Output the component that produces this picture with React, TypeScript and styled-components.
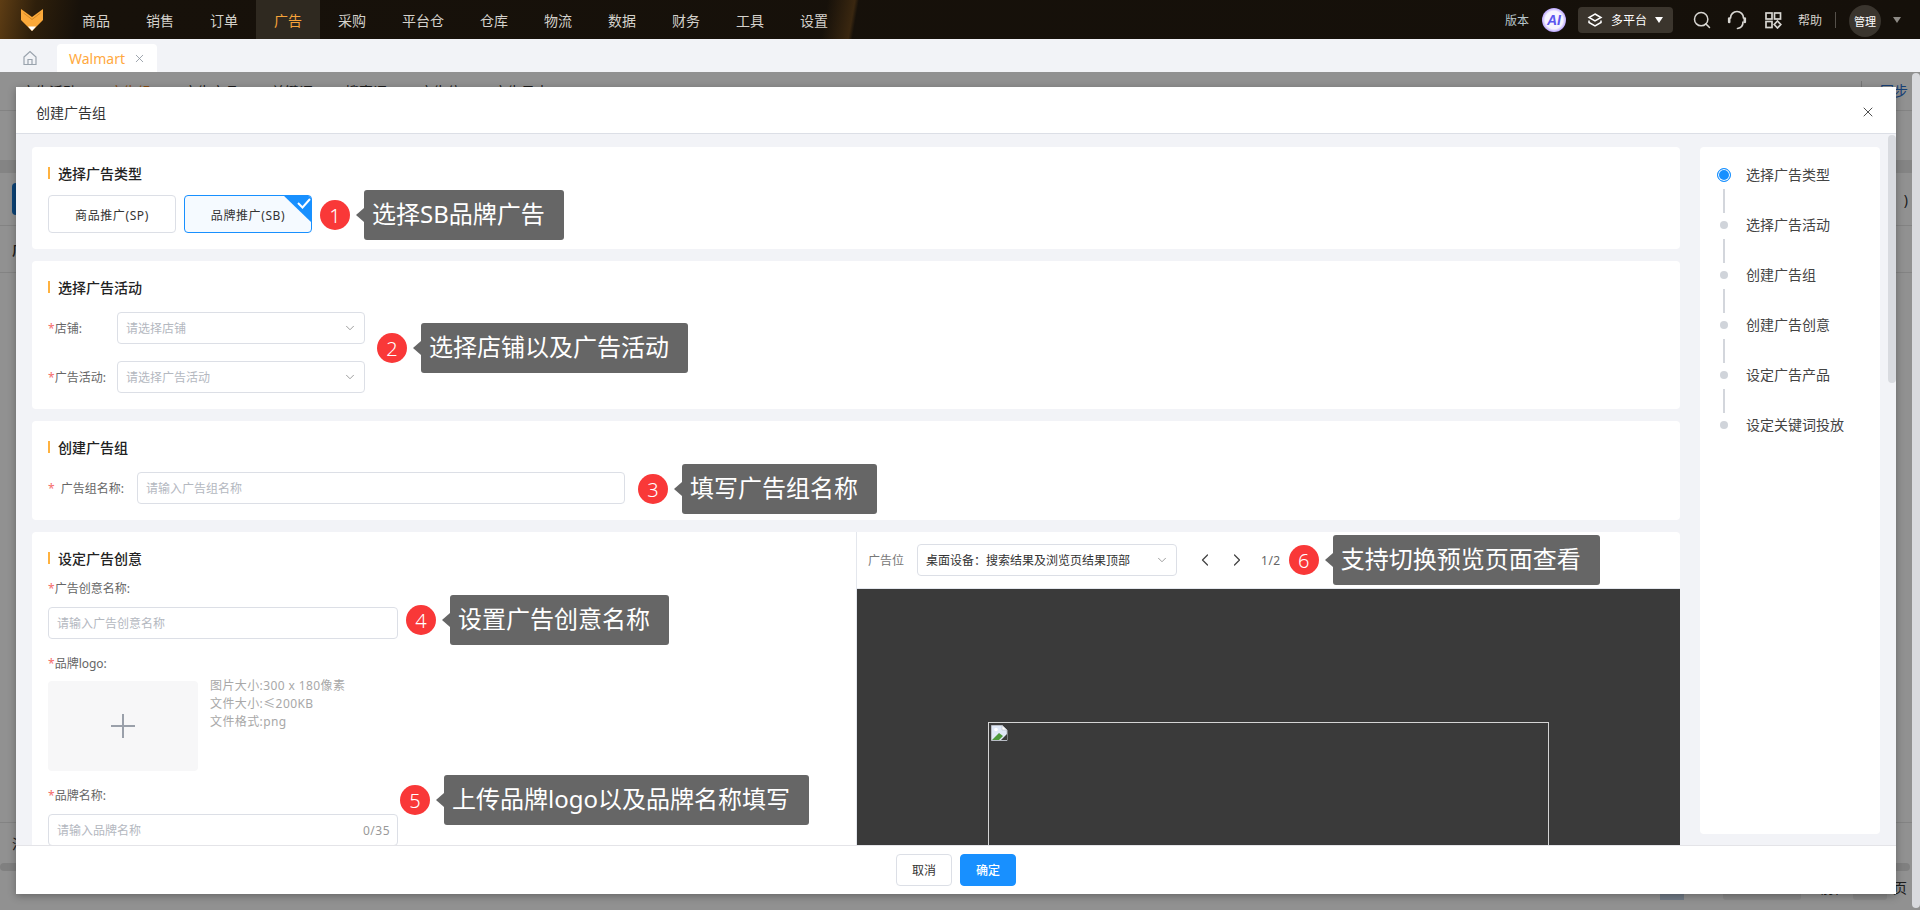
import React from "react";
import styled, { createGlobalStyle } from "styled-components";
import { ChevronDown, ChevronLeft, ChevronRight, X, Search } from "lucide-react";

const Global = createGlobalStyle`
  html, body { margin: 0; padding: 0; height: 910px; overflow: hidden; }
  body { font-family: "Noto Sans", "Noto Sans CJK SC", sans-serif; font-size: 12px; color: #333; background: #fff; }
  * { box-sizing: border-box; }
`;

const Page = styled.div`
  width: 1920px; height: 910px; display: flex; flex-direction: column; position: relative; overflow: hidden;
`;
const TopBar = styled.header`
  height: 39px; flex: none; display: flex; align-items: center; color: #d4d1cc;
  background:
    linear-gradient(100deg, transparent 0, transparent 815px, #3a2710 842px, transparent 846px),
    linear-gradient(100deg, #5e3d14 0, #2e1f0b 36px, #17110a 80px, #15100a 100%);
`;
const LogoCell = styled.div`
  width: 64px; height: 39px; flex: none; display: flex; align-items: center; padding-left: 21px;
`;
const NavItem = styled.div<{ $active?: boolean }>`
  height: 39px; flex: none; display: flex; align-items: center; padding: 0 18px;
  font-size: 14px; color: ${(p) => (p.$active ? "#f5a33a" : "#d4d1cc")};
  background: ${(p) => (p.$active ? "#2f2920" : "transparent")};
`;
const TopRight = styled.div`
  margin-left: auto; display: flex; align-items: center; height: 39px; padding-right: 19px;
`;
const VersionText = styled.span`
  font-size: 12px; color: #b8c6cb; margin-right: 13px; letter-spacing: 0;
`;
const AiCircle = styled.div`
  width: 24px; height: 24px; border-radius: 50%; display: flex; align-items: center; justify-content: center;
  background: radial-gradient(circle, #f6f4ff 52%, #a88cff 76%, #4fa8f5 100%);
  color: #5b57ee; font: italic 700 14px "Liberation Sans", sans-serif; margin-right: 12px;
`;
const PlatformPill = styled.div`
  width: 95px; height: 26px; border-radius: 4px; background: #3b352d; display: flex; align-items: center;
  padding-left: 9px; color: #fff; font-size: 12px; margin-right: 19px;
`;
const PillText = styled.span`
  margin: 0 8px 0 8px;
`;
const Caret = styled.span<{ $muted?: boolean }>`
  width: 0; height: 0; border-left: 4.5px solid transparent; border-right: 4.5px solid transparent;
  border-top: 6px solid ${(p) => (p.$muted ? "#8d8a85" : "#fff")};
`;
const TopIcon = styled.div<{ $gap: number }>`
  width: 20px; height: 20px; display: flex; align-items: center; justify-content: center; margin-right: ${(p) => p.$gap}px; color: #d8d6d2;
`;
const HelpText = styled.span`
  color: #d4d1cc; font-size: 12px;
`;
const TopSep = styled.div`
  width: 1px; height: 16px; background: #55504a; margin: 0 13px 0 13px;
`;
const Avatar = styled.div`
  width: 32px; height: 32px; border-radius: 50%; background: #3a352e; color: #fff; font-size: 11px;
  display: flex; align-items: center; justify-content: center; margin: 2px 12px 0 0;
`;

const TabBar = styled.nav`
  height: 33px; flex: none; background: #f2f3f7; display: flex; align-items: flex-end; padding-left: 22px;
`;
const HomeIcon = styled.div`
  width: 16px; height: 28px; margin-right: 19px; display: flex; align-items: center;
`;
const Tab = styled.div`
  width: 100px; height: 28px; background: #fff; border-radius: 4px 4px 0 0; display: flex; align-items: center;
  padding-left: 12px; font-size: 14px; color: #ffa940; gap: 8px;
`;

const Behind = styled.div`
  flex: 1; display: flex; min-height: 0; background: #919191;
`;
const Backdrop = styled.div`
  flex: 1; position: relative; background: #fff; overflow: hidden; display: flex; flex-direction: column;
  &::after { content: ""; position: absolute; inset: 0; background: rgba(0, 0, 0, 0.43); }
`;
const PageScroll = styled.div`
  width: 8px; height: 835px; margin-top: 1px; background: #d9dade; border-radius: 4px; flex: none;
`;
const SubTabs = styled.div`
  height: 39px; flex: none; display: flex; align-items: center; gap: 32px; padding: 0 4px 0 21px; font-size: 14px; color: #333;
  border-bottom: 1px solid #e6e6e6;
`;
const SubTab = styled.span<{ $active?: boolean }>`
  color: ${(p) => (p.$active ? "#f5891f" : "#333")};
`;
const SyncLink = styled.span`
  margin-left: auto; padding-left: 18px; border-left: 1px solid #d0d0d0; color: #2a6fd0; line-height: 20px;
`;
const Spacer = styled.div`
  height: 49px; flex: none;
`;
const Band = styled.div`
  height: 13px; flex: none; background: #e9e9e9;
`;
const FilterRow = styled.div`
  height: 53px; flex: none; display: flex; align-items: center; justify-content: space-between; padding: 0 4px 0 12px;
  border-bottom: 1px solid #e6e6e6; font-size: 14px; color: #333;
`;
const BlueBlock = styled.div`
  width: 60px; height: 32px; background: #1677d2; border-radius: 4px;
`;
const HeadRow = styled.div`
  height: 47px; flex: none; display: flex; align-items: center; padding-left: 12px; border-bottom: 1px solid #e6e6e6;
  font-size: 14px; font-weight: 500; color: #333;
`;
const TableBody = styled.div`
  height: 550px; flex: none; border-bottom: 1px solid #e6e6e6;
`;
const SumRow = styled.div`
  height: 40px; flex: none; display: flex; align-items: center; padding: 0 0 0 12px; font-size: 14px; color: #333;
`;
const HScroll = styled.div`
  height: 8px; flex: none; margin-right: 2px; border-radius: 4px; background: #e2e2e2;
`;
const Pagination = styled.div`
  height: 32px; flex: none; display: flex; align-items: center; justify-content: flex-end; padding-right: 5px; font-size: 14px; color: #333;
`;
const PageCell = styled.div`
  width: 24px; height: 26px; background: #c7d9ec; margin-right: 39px;
`;
const PageSelect = styled.div`
  width: 78px; height: 26px; border-radius: 3px; background: #f0f0f0; margin-right: 19px; display: flex; align-items: center; justify-content: center; font-size: 12px;
`;
const PageInput = styled.div`
  width: 34px; height: 26px; border-radius: 3px; background: #f0f0f0; margin: 0 6px 0 5px;
`;

const Modal = styled.section`
  position: absolute; left: 16px; top: 87px; width: 1880px; height: 807px; background: #fff; display: flex; flex-direction: column;
  box-shadow: 0 2px 8px rgba(0, 0, 0, 0.3);
`;
const ModalHead = styled.div`
  height: 47px; flex: none; display: flex; align-items: center; justify-content: space-between; padding: 3px 20px 0 20px;
  border-bottom: 1px solid #dcdfe6; font-size: 14px; color: #333;
`;
const ModalBody = styled.div`
  flex: 1; min-height: 0; background: #f2f3f7; display: flex; padding: 13px 16px 0 16px; position: relative; overflow: hidden;
`;
const BodyScroll = styled.div`
  position: absolute; right: 0; top: 1px; width: 8px; height: 248px; border-radius: 4px; background: #d9dbe0;
`;
const FormColumn = styled.div`
  width: 1648px; flex: none; display: flex; flex-direction: column; gap: 12px; min-height: 0;
`;
const Card = styled.div<{ $h?: number }>`
  background: #fff; border-radius: 4px; padding: 20px 16px 0; position: relative; flex: none;
  height: ${(p) => p.$h}px;
`;
const CreativeCard = styled.div`
  background: #fff; border-radius: 4px 4px 0 0; position: relative; flex: 1; min-height: 0; display: flex; overflow: hidden;
`;
const Heading = styled.h3`
  margin: 0; height: 12px; display: flex; align-items: center; gap: 8px; font-size: 14px; font-weight: 500; color: #222;
  line-height: 14px; padding-top: 1px; overflow: visible;
  &::before { content: ""; width: 2px; height: 12px; margin-top: -1px; background: #ffb23f; flex: none; }
`;
const TypeRow = styled.div`
  display: flex; gap: 8px; margin-top: 16px;
`;
const TypeButton = styled.div<{ $selected?: boolean }>`
  width: 128px; height: 38px; border-radius: 4px; position: relative; display: flex; align-items: center; justify-content: center;
  font-size: 12px; color: #333; overflow: hidden; letter-spacing: 0.6px; padding-top: 1px;
  border: 1px solid ${(p) => (p.$selected ? "#1890ff" : "#dcdfe6")};
  background: ${(p) => (p.$selected ? "#f5faff" : "#fff")};
`;
const CheckCorner = styled.svg`
  position: absolute; right: -1px; top: -1px;
`;
const FieldRow = styled.div<{ $top: number }>`
  display: flex; align-items: center; margin-top: ${(p) => p.$top}px;
`;
const InlineLabel = styled.label<{ $w: number }>`
  width: ${(p) => p.$w}px; flex: none; font-size: 12px; color: #666;
`;
const Req = styled.span<{ $space?: boolean }>`
  color: #f56c6c; margin-right: ${(p) => (p.$space ? 6 : 0)}px;
`;
const Control = styled.div<{ $w: number; $strong?: boolean }>`
  width: ${(p) => p.$w}px; height: 32px; border: 1px solid #dcdfe6; border-radius: 4px; display: flex; align-items: center;
  justify-content: space-between; padding: 0 7px 0 8px; font-size: 12px; background: #fff; flex: none;
  color: ${(p) => (p.$strong ? "#333" : "#b4b8bf")};
`;
const Counter = styled.span`
  color: #999; letter-spacing: 0.5px;
`;
const LeftPane = styled.div`
  width: 825px; flex: none; padding: 20px 16px 0; border-right: 1px solid #e4e7ed;
`;
const BlockLabel = styled.label<{ $bottom: number }>`
  display: block; margin: 17px 0 ${(p) => p.$bottom}px; line-height: 16px; font-size: 12px; color: #666;
`;
const UploadRow = styled.div`
  display: flex; gap: 12px;
`;
const UploadBox = styled.div`
  width: 150px; height: 90px; border-radius: 4px; background: #f7f7f8; display: flex; align-items: center; justify-content: center;
`;
const UploadHints = styled.div`
  color: #a8a8a8; font-size: 12px; line-height: 18px; margin-top: -4px; letter-spacing: 0.4px;
`;
const RightPane = styled.div`
  flex: 1; min-width: 0; display: flex; flex-direction: column;
`;
const PreviewBar = styled.div`
  height: 57px; flex: none; display: flex; align-items: center; padding-left: 11px; border-bottom: 1px solid #e4e7ed; font-size: 12px;
`;
const BarLabel = styled.span`
  color: #777; margin-right: 13px;
`;
const PagerButton = styled.div<{ $first?: boolean }>`
  width: 32px; height: 32px; display: flex; align-items: center; justify-content: center; color: #444; margin-left: ${(p) => (p.$first ? 12 : 0)}px;
`;
const PageCount = styled.span`
  color: #666; margin: 0 8px; letter-spacing: 0.5px;
`;
const Preview = styled.div`
  flex: 1; min-height: 0; background: #3a3a3a; padding: 133px 0 0 131px; overflow: hidden;
`;
const PreviewFrame = styled.div`
  width: 561px; height: 320px; border: 1px solid #d4d4d4; padding: 2px 0 0 2px;
`;
const Annotation = styled.div<{ $left?: number; $top?: number }>`
  display: flex; align-items: center; gap: 14px; height: 50px; flex: none; z-index: 2;
  ${(p) => (p.$left !== undefined ? `position: absolute; left: ${p.$left}px; top: ${p.$top}px;` : "")}
`;
const NumberBadge = styled.div`
  width: 30px; height: 30px; border-radius: 50%; background: #f93838; color: #fff; font-size: 20px; font-weight: 300; display: flex; align-items: center; justify-content: center;
`;
const Callout = styled.div`
  height: 50px; background: #666; border-radius: 3px; color: #fff; font-size: 24px; line-height: 48px; padding: 0 19px 0 8px; position: relative; white-space: nowrap;
  &::before { content: ""; position: absolute; left: -8px; top: 18px; border-top: 7px solid transparent; border-bottom: 7px solid transparent; border-right: 8px solid #666; }
`;
const StepsPanel = styled.aside`
  width: 180px; flex: none; margin: 0 0 11px 20px; background: #fff; border-radius: 4px; padding-top: 3px;
`;
const Step = styled.div<{ $last?: boolean }>`
  height: 50px; display: flex; align-items: center; position: relative; font-size: 14px; color: #444;
  ${(p) => (p.$last ? "" : `&::after { content: ""; position: absolute; left: 23px; top: 39px; width: 2px; height: 24px; background: #d3d6dc; }`)}
`;
const StepLabel = styled.span`
  margin-top: -2px;
`;
const DotCell = styled.div`
  width: 46px; flex: none; padding-right: 0; display: flex; justify-content: center;
`;
const Dot = styled.span<{ $active?: boolean }>`
  display: block; border-radius: 50%; margin-left: 1px;
  ${(p) =>
    p.$active
      ? "width: 14px; height: 14px; background: #1890ff; border: 1px solid #1890ff; box-shadow: inset 0 0 0 1px #fff;"
      : "width: 8px; height: 8px; background: #d0d4da;"}
`;
const ModalFoot = styled.div`
  height: 49px; flex: none; border-top: 1px solid #e4e4e8; background: #fff; display: flex; align-items: center; justify-content: center; gap: 8px;
`;
const FootButton = styled.button<{ $primary?: boolean }>`
  width: 56px; height: 32px; border-radius: 4px; font: inherit; font-size: 12px; cursor: pointer; padding: 0;
  border: 1px solid ${(p) => (p.$primary ? "#1890ff" : "#dcdfe6")};
  background: ${(p) => (p.$primary ? "#1890ff" : "#fff")};
  color: ${(p) => (p.$primary ? "#fff" : "#333")};
  font-weight: ${(p) => (p.$primary ? 500 : 400)};
`;

const FoxLogo = () => (
  <svg width="22" height="22" viewBox="0 0 22 22">
    <path d="M0 0 L11 8 L22 0 V11 L11 22 L0 11 Z" fill="#fba93a" />
    <path d="M2.5 4 L11 10.5 L19.5 4" fill="none" stroke="#c97f20" strokeWidth="0.8" />
    <path d="M7 17.5 H15 L11 22 Z" fill="#fff" />
  </svg>
);
const HomeGlyph = () => (
  <svg width="16" height="16" viewBox="0 0 16 16" fill="none" stroke="#9aa3ad" strokeWidth="1.2">
    <path d="M2 7 L8 1.5 L14 7 V14.5 H2 Z" />
    <path d="M6 14.5 V9.5 H10 V14.5" />
  </svg>
);
const LayersGlyph = () => (
  <svg width="16" height="16" viewBox="0 0 16 16" fill="none" stroke="#fff" strokeWidth="1.5">
    <path d="M8 2 L14 5.5 L8 9 L2 5.5 Z" />
    <path d="M2 8.5 V10.5 L8 14 L14 10.5 V8.5" />
  </svg>
);
const HeadsetGlyph = () => (
  <svg width="20" height="20" viewBox="0 0 20 20" fill="none" stroke="#d8d6d2" strokeWidth="1.7" strokeLinecap="round">
    <path d="M3.5 8 A6.5 6.5 0 0 1 16.5 8" />
    <path d="M2.2 8.5 V12" strokeWidth="2.6" />
    <path d="M17.8 8.5 V12" strokeWidth="2.6" />
    <path d="M16 12 C16 15.5 14 18 10.5 18.5" />
  </svg>
);
const AppsGlyph = () => (
  <svg width="18" height="18" viewBox="0 0 18 18" fill="none" stroke="#d8d6d2" strokeWidth="1.7">
    <rect x="2" y="2" width="6" height="6" />
    <rect x="10.5" y="2" width="6" height="6" />
    <rect x="2" y="10.5" width="6" height="6" />
    <path d="M13.5 10 L16.8 13.5 L13.5 17 L10.2 13.5 Z" />
  </svg>
);
const BrokenImage = () => (
  <svg width="17" height="16" viewBox="0 0 17 16">
    <path d="M0.5 0.5 H11 L16 5 V15.5 H0.5 Z" fill="#dfe8f7" stroke="#b8bcc4" strokeWidth="1" />
    <path d="M11 0.5 V5 H16 Z" fill="#fff" stroke="#b8bcc4" strokeWidth="0.6" />
    <path d="M1 15 L8 8 L12 11 L8 15 Z" fill="#4e9a3c" />
    <path d="M10 15 L16 9 V15 Z" fill="#3a3a3a" />
    <circle cx="5" cy="4.5" r="1.8" fill="#fff" />
  </svg>
);

const Select = ({ w, text, strong }: { w: number; text: string; strong?: boolean }) => (
  <Control $w={w} $strong={strong}>
    <span>{text}</span>
    <ChevronDown size={14} strokeWidth={1.4} color="#888" />
  </Control>
);
const Note = ({ n, text, left, top }: { n: number; text: string; left?: number; top?: number }) => (
  <Annotation $left={left} $top={top}>
    <NumberBadge>{n}</NumberBadge>
    <Callout>{text}</Callout>
  </Annotation>
);

const nav = ["商品", "销售", "订单", "广告", "采购", "平台仓", "仓库", "物流", "数据", "财务", "工具", "设置"];
const subTabs = ["广告活动", "广告组", "广告产品", "关键词", "搜索词", "广告位", "广告日志"];
const steps = ["选择广告类型", "选择广告活动", "创建广告组", "创建广告创意", "设定广告产品", "设定关键词投放"];

export default function App() {
  return (
    <Page>
      <Global />
      <TopBar>
        <LogoCell><FoxLogo /></LogoCell>
        {nav.map((n) => (
          <NavItem key={n} $active={n === "广告"}>{n}</NavItem>
        ))}
        <TopRight>
          <VersionText>版本</VersionText>
          <AiCircle>AI</AiCircle>
          <PlatformPill>
            <LayersGlyph />
            <PillText>多平台</PillText>
            <Caret />
          </PlatformPill>
          <TopIcon $gap={15}><Search size={20} strokeWidth={1.8} /></TopIcon>
          <TopIcon $gap={16}><HeadsetGlyph /></TopIcon>
          <TopIcon $gap={15}><AppsGlyph /></TopIcon>
          <HelpText>帮助</HelpText>
          <TopSep />
          <Avatar>管理</Avatar>
          <Caret $muted />
        </TopRight>
      </TopBar>
      <TabBar>
        <HomeIcon><HomeGlyph /></HomeIcon>
        <Tab>Walmart <X size={13} strokeWidth={1.5} color="#8a939d" /></Tab>
      </TabBar>
      <Behind>
        <Backdrop>
          <SubTabs>
            {subTabs.map((t) => (
              <SubTab key={t} $active={t === "广告组"}>{t}</SubTab>
            ))}
            <SyncLink>同步</SyncLink>
          </SubTabs>
          <Spacer />
          <Band />
          <FilterRow><BlueBlock /><span>)</span></FilterRow>
          <HeadRow>广告</HeadRow>
          <TableBody />
          <SumRow>活</SumRow>
          <HScroll />
          <Pagination>
            <PageCell />
            <PageSelect>20条/页</PageSelect>
            前往
            <PageInput />
            页
          </Pagination>
        </Backdrop>
        <PageScroll />
      </Behind>
      <Modal>
        <ModalHead>
          创建广告组
          <X size={16} strokeWidth={1.3} color="#333" />
        </ModalHead>
        <ModalBody>
          <FormColumn>
            <Card $h={102}>
              <Heading>选择广告类型</Heading>
              <TypeRow>
                <TypeButton>商品推广(SP)</TypeButton>
                <TypeButton $selected>
                  品牌推广(SB)
                  <CheckCorner width="29" height="28" viewBox="0 0 29 28">
                    <polygon points="0,0 29,0 29,28" fill="#1890ff" />
                    <polyline points="15,8 19.5,12.5 27,4" fill="none" stroke="#fff" strokeWidth="2" />
                  </CheckCorner>
                </TypeButton>
              </TypeRow>
              <Note n={1} text="选择SB品牌广告" left={288} top={43} />
            </Card>
            <Card $h={148}>
              <Heading>选择广告活动</Heading>
              <FieldRow $top={19}>
                <InlineLabel $w={69}><Req>*</Req>店铺:</InlineLabel>
                <Select w={248} text="请选择店铺" />
              </FieldRow>
              <FieldRow $top={17}>
                <InlineLabel $w={69}><Req>*</Req>广告活动:</InlineLabel>
                <Select w={248} text="请选择广告活动" />
              </FieldRow>
              <Note n={2} text="选择店铺以及广告活动" left={345} top={62} />
            </Card>
            <Card $h={99}>
              <Heading>创建广告组</Heading>
              <FieldRow $top={19}>
                <InlineLabel $w={89}><Req $space>*</Req>广告组名称:</InlineLabel>
                <Control $w={488}>请输入广告组名称</Control>
              </FieldRow>
              <Note n={3} text="填写广告组名称" left={606} top={43} />
            </Card>
            <CreativeCard>
              <LeftPane>
                <Heading>设定广告创意</Heading>
                <BlockLabel $bottom={10}><Req>*</Req>广告创意名称:</BlockLabel>
                <Control $w={350}>请输入广告创意名称</Control>
                <BlockLabel $bottom={9}><Req>*</Req>品牌logo:</BlockLabel>
                <UploadRow>
                  <UploadBox>
                    <svg width="24" height="24" viewBox="0 0 24 24" stroke="#9aa0aa" strokeWidth="2">
                      <path d="M12 0 V24 M0 12 H24" />
                    </svg>
                  </UploadBox>
                  <UploadHints>
                    <div>图片大小:300 x 180像素</div>
                    <div>文件大小:≤200KB</div>
                    <div>文件格式:png</div>
                  </UploadHints>
                </UploadRow>
                <BlockLabel $bottom={10}><Req>*</Req>品牌名称:</BlockLabel>
                <Control $w={350}>
                  <span>请输入品牌名称</span>
                  <Counter>0/35</Counter>
                </Control>
                <Note n={4} text="设置广告创意名称" left={374} top={63} />
                <Note n={5} text="上传品牌logo以及品牌名称填写" left={368} top={243} />
              </LeftPane>
              <RightPane>
                <PreviewBar>
                  <BarLabel>广告位</BarLabel>
                  <Select w={260} text="桌面设备：搜索结果及浏览页结果顶部" strong />
                  <PagerButton $first><ChevronLeft size={20} strokeWidth={1.5} /></PagerButton>
                  <PagerButton><ChevronRight size={20} strokeWidth={1.5} /></PagerButton>
                  <PageCount>1/2</PageCount>
                  <Note n={6} text="支持切换预览页面查看" />
                </PreviewBar>
                <Preview>
                  <PreviewFrame><BrokenImage /></PreviewFrame>
                </Preview>
              </RightPane>
            </CreativeCard>
          </FormColumn>
          <StepsPanel>
            {steps.map((s, i) => (
              <Step key={s} $last={i === steps.length - 1}>
                <DotCell><Dot $active={i === 0} /></DotCell>
                <StepLabel>{s}</StepLabel>
              </Step>
            ))}
          </StepsPanel>
          <BodyScroll />
        </ModalBody>
        <ModalFoot>
          <FootButton>取消</FootButton>
          <FootButton $primary>确定</FootButton>
        </ModalFoot>
      </Modal>
    </Page>
  );
}
